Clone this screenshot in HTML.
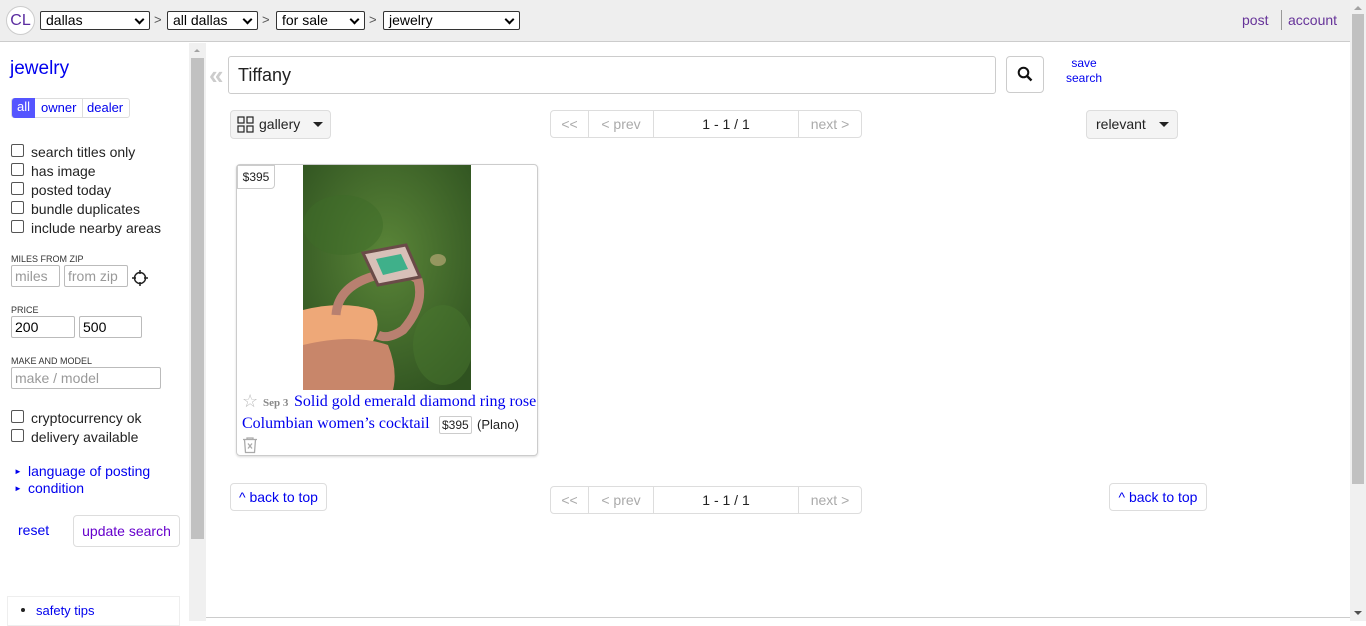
<!DOCTYPE html>
<html><head><meta charset="utf-8"><style>
*{box-sizing:border-box;margin:0;padding:0}
body{width:1366px;height:621px;overflow:hidden;background:#fff;font-family:"Liberation Sans",Arial,sans-serif;font-size:14px;color:#222;position:relative}
.a{position:absolute}
a,.lk{color:#00e;text-decoration:none}
.hdr{left:0;top:0;width:1350px;height:42px;background:#eee;border-bottom:1px solid #ccc}
.sel{position:absolute;top:11px;height:19px;border:1px solid #333;border-radius:2px;background:#fff;font-size:14px;line-height:17px;padding-left:5px;color:#000}
.sel:after{content:"";position:absolute;right:6px;top:4px;width:5px;height:5px;border-right:2px solid #000;border-bottom:2px solid #000;transform:rotate(45deg)}
.gt{position:absolute;top:12px;font-size:13px;color:#555}
.cb{position:absolute;left:11px;width:13px;height:13px;border:1px solid #555;border-radius:2px;background:#fff}
.cbl{position:absolute;left:31px;font-size:14px;color:#222}
.lab{position:absolute;left:11px;font-size:9px;color:#333}
.inp{position:absolute;height:22px;border:1px solid #bbb;border-radius:2px;font-size:14px;line-height:20px;padding-left:3px;color:#999}
.btn{position:absolute;border:1px solid #ddd;border-radius:4px;background:#fff}
.pg{position:absolute;height:28px;border:1px solid #ddd;border-radius:4px;display:flex;font-size:14px;line-height:26px;color:#aaa}
.pg div{border-right:1px solid #ddd;text-align:center}
.pg div:last-child{border-right:0}
</style></head><body>
<div class="a hdr"></div>
<div class="a" style="left:6px;top:6px;width:29px;height:29px;border-radius:50%;background:#fff;border:1px solid #ccc;color:#5a2ca0;font-size:16px;line-height:27px;text-align:center">CL</div>
<div class="sel" style="left:40px;width:110px">dallas</div><span class="gt" style="left:154px">&gt;</span>
<div class="sel" style="left:167px;width:91px">all dallas</div><span class="gt" style="left:262px">&gt;</span>
<div class="sel" style="left:276px;width:89px">for sale</div><span class="gt" style="left:369px">&gt;</span>
<div class="sel" style="left:383px;width:137px">jewelry</div>
<div class="a" style="left:1242px;top:12px;font-size:14px;color:#639">post</div>
<div class="a" style="left:1281px;top:10px;width:1px;height:20px;background:#999"></div>
<div class="a" style="left:1288px;top:12px;font-size:14px;color:#639">account</div>

<div class="a" style="left:1350px;top:0;width:16px;height:621px;background:#f0f0f0"></div>
<div class="a" style="left:1352px;top:14px;width:12px;height:470px;background:#c1c1c1"></div>
<div class="a" style="left:1354px;top:6px;border:4px solid transparent;border-bottom:4px solid #a3a3a3;border-top:0"></div>
<div class="a" style="left:1354px;top:611px;border:4px solid transparent;border-top:4px solid #505050;border-bottom:0"></div>

<div class="a" style="left:10px;top:58px;font-size:19px;color:#00e">jewelry</div>
<div class="a" style="left:11px;top:98px;width:119px;height:20px;border:1px solid #ddd;border-radius:3px;font-size:13px;line-height:18px">
<span class="a" style="left:0;top:-1px;width:23px;height:20px;background:#55f;color:#fff;text-align:center;border-radius:3px 0 0 3px">all</span>
<span class="a" style="left:29px;top:0;color:#00e">owner</span>
<span class="a" style="left:70px;top:-1px;height:20px;border-left:1px solid #ddd"></span>
<span class="a" style="left:75px;top:0;color:#00e">dealer</span></div>
<div class="cb" style="top:144px"></div><span class="cbl" style="top:144px">search titles only</span>
<div class="cb" style="top:163px"></div><span class="cbl" style="top:163px">has image</span>
<div class="cb" style="top:182px"></div><span class="cbl" style="top:182px">posted today</span>
<div class="cb" style="top:201px"></div><span class="cbl" style="top:201px">bundle duplicates</span>
<div class="cb" style="top:220px"></div><span class="cbl" style="top:220px">include nearby areas</span>
<div class="lab" style="top:254px">MILES FROM ZIP</div>
<div class="inp" style="left:11px;top:265px;width:49px">miles</div>
<div class="inp" style="left:64px;top:265px;width:64px">from zip</div>
<svg class="a" style="left:132px;top:270px" width="16" height="16" viewBox="0 0 16 16"><circle cx="8" cy="8" r="5.5" fill="none" stroke="#222" stroke-width="1.5"/><path d="M8 0v4M8 12v4M0 8h4M12 8h4" stroke="#222" stroke-width="1.5"/></svg>
<div class="lab" style="top:305px">PRICE</div>
<div class="inp" style="left:11px;top:316px;width:64px;color:#000">200</div>
<div class="inp" style="left:79px;top:316px;width:63px;color:#000">500</div>
<div class="lab" style="top:356px">MAKE AND MODEL</div>
<div class="inp" style="left:11px;top:367px;width:150px">make / model</div>
<div class="cb" style="top:410px"></div><span class="cbl" style="top:410px">cryptocurrency ok</span>
<div class="cb" style="top:429px"></div><span class="cbl" style="top:429px">delivery available</span>
<div class="a" style="left:14px;top:467px;font-size:8px;color:#00e">&#9658;</div><span class="a lk" style="left:28px;top:463px">language of posting</span>
<div class="a" style="left:14px;top:484px;font-size:8px;color:#00e">&#9658;</div><span class="a lk" style="left:28px;top:480px">condition</span>
<span class="a lk" style="left:18px;top:522px">reset</span>
<div class="btn" style="left:73px;top:515px;width:107px;height:32px;font-size:14px;line-height:30px;text-align:center;color:#60c">update search</div>
<div class="a" style="left:7px;top:596px;width:173px;height:30px;border:1px solid #eee"></div>
<div class="a" style="left:21px;top:608px;width:4px;height:4px;border-radius:50%;background:#222"></div>
<span class="a lk" style="left:36px;top:603px;font-size:13px">safety tips</span>

<div class="a" style="left:189px;top:43px;width:17px;height:578px;background:#f0f0f0"></div>
<div class="a" style="left:191px;top:58px;width:13px;height:481px;background:#c1c1c1"></div>
<div class="a" style="left:194px;top:49px;border:3px solid transparent;border-bottom:3px solid #a3a3a3;border-top:0"></div>
<div class="a" style="left:206px;top:617px;width:1144px;height:1px;background:#ccc"></div>

<div class="a" style="left:209px;top:60px;font-size:26px;color:#ccc;font-weight:bold;line-height:30px">«</div>
<div class="a" style="left:228px;top:56px;width:768px;height:38px;border:1px solid #ccc;border-radius:3px;font-size:18px;line-height:36px;padding-left:9px;color:#222">Tiffany</div>
<div class="btn" style="left:1006px;top:56px;width:38px;height:37px;border-color:#ccc"></div>
<svg class="a" style="left:1017px;top:66px" width="16" height="16" viewBox="0 0 16 16"><circle cx="6.5" cy="6.5" r="4.8" fill="none" stroke="#111" stroke-width="2"/><path d="M10 10l4.5 4.5" stroke="#111" stroke-width="2.4"/></svg>
<div class="a lk" style="left:1066px;top:56px;font-size:12px;line-height:15px;text-align:center">save<br>search</div>

<div class="btn" style="left:230px;top:110px;width:101px;height:29px;background:#f4f4f4;border-color:#ddd"></div>
<svg class="a" style="left:237px;top:116px" width="17" height="17" viewBox="0 0 17 17" fill="none" stroke="#222" stroke-width="1.2"><rect x="1" y="1" width="6" height="6"/><rect x="10" y="1" width="6" height="6"/><rect x="1" y="10" width="6" height="6"/><rect x="10" y="10" width="6" height="6"/></svg>
<span class="a" style="left:259px;top:116px;font-size:14px;color:#222">gallery</span>
<div class="a" style="left:313px;top:122px;border:5px solid transparent;border-top:5px solid #222;border-bottom:0"></div>

<div class="pg" style="left:550px;top:110px;width:312px"><div style="width:38px">&lt;&lt;</div><div style="width:65px">&lt; prev</div><div style="width:145px;color:#222">1 - 1 / 1</div><div style="width:62px">next &gt;</div></div>
<div class="btn" style="left:1086px;top:110px;width:92px;height:29px;background:#f4f4f4"></div>
<span class="a" style="left:1096px;top:116px;color:#222">relevant</span>
<div class="a" style="left:1159px;top:122px;border:5px solid transparent;border-top:5px solid #222;border-bottom:0"></div>

<div class="a" style="left:236px;top:164px;width:302px;height:292px;border:1px solid #ccc;border-radius:4px;box-shadow:0 1px 2px rgba(0,0,0,.15)"></div>
<svg class="a" style="left:303px;top:165px" width="168" height="225" viewBox="0 0 168 225">
<defs><radialGradient id="g" cx="50%" cy="40%" r="70%"><stop offset="0" stop-color="#5a8538"/><stop offset="1" stop-color="#2f5220"/></radialGradient></defs>
<rect width="168" height="225" fill="url(#g)"/>
<ellipse cx="40" cy="60" rx="40" ry="30" fill="#3e6b28" opacity=".5"/>
<ellipse cx="140" cy="180" rx="30" ry="40" fill="#48762e" opacity=".5"/>
<ellipse cx="135" cy="95" rx="8" ry="6" fill="#c8b080" opacity=".6"/>
<path d="M0 145 Q40 135 70 145 Q80 160 68 180 L0 185Z" fill="#eea878"/>
<path d="M0 180 Q50 168 85 180 Q95 205 90 225 L0 225Z" fill="#c8866a"/>
<path d="M33 150 Q35 120 75 110 Q105 105 115 115 Q122 140 100 165 Q85 175 75 170" fill="none" stroke="#b88070" stroke-width="9"/>
<path d="M60 88 L103 80 L117 112 L75 120Z" fill="#d8c0b8" stroke="#6a4b48" stroke-width="3"/>
<path d="M73 94 L98 89 L105 104 L80 110Z" fill="#3fb08a"/>
</svg>
<div class="a" style="left:237px;top:165px;width:38px;height:24px;background:#fff;border:1px solid #ccc;border-radius:0 0 4px 0;font-size:12px;line-height:22px;text-align:center;color:#222">$395</div>
<div class="a" style="left:242px;top:391px;font-size:18px;color:#bbb">☆</div>
<span class="a" style="left:263px;top:397px;font-family:'Liberation Serif',serif;font-size:11px;color:#888;font-weight:bold">Sep 3</span>
<span class="a lk" style="left:294px;top:393px;font-family:'Liberation Serif',serif;font-size:16px">Solid gold emerald diamond ring rose</span>
<span class="a lk" style="left:242px;top:415px;font-family:'Liberation Serif',serif;font-size:16px">Columbian women’s cocktail</span>
<span class="a" style="left:439px;top:416px;height:18px;border:1px solid #ccc;border-radius:2px;font-size:12px;line-height:16px;padding:0 2px;color:#222">$395</span>
<span class="a" style="left:477px;top:417px;font-size:13px;color:#222">(Plano)</span>
<svg class="a" style="left:242px;top:437px" width="16" height="17" viewBox="0 0 16 17" fill="none" stroke="#aaa" stroke-width="1.3"><path d="M1 2.5h14M5 2.5V1h6v1.5M2.5 2.5l1 13h9l1-13M6 6.5l4 5M10 6.5l-4 5"/></svg>

<div class="btn" style="left:230px;top:483px;width:97px;height:28px;font-size:14px;line-height:26px;text-align:center;color:#00e">^ back to top</div>
<div class="pg" style="left:550px;top:486px;width:312px"><div style="width:38px">&lt;&lt;</div><div style="width:65px">&lt; prev</div><div style="width:145px;color:#222">1 - 1 / 1</div><div style="width:62px">next &gt;</div></div>
<div class="btn" style="left:1109px;top:483px;width:98px;height:28px;font-size:14px;line-height:26px;text-align:center;color:#00e">^ back to top</div>
</body></html>
